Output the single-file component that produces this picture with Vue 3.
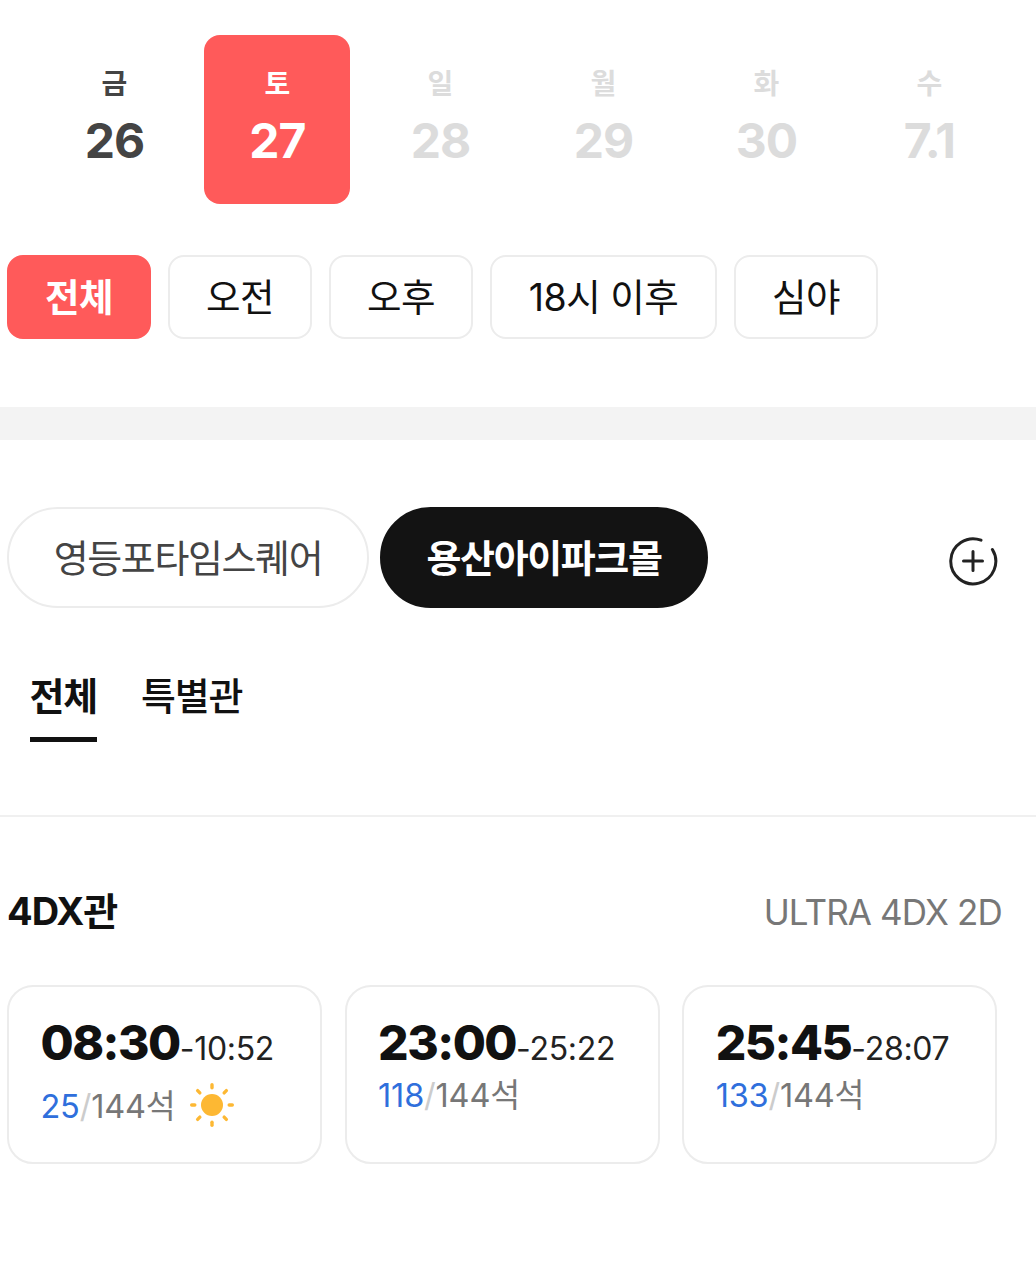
<script setup>
const dates = [
  { d: '금', n: '26', cls: 'normal' },
  { d: '토', n: '27', cls: 'active' },
  { d: '일', n: '28', cls: 'off' },
  { d: '월', n: '29', cls: 'off' },
  { d: '화', n: '30', cls: 'off' },
  { d: '수', n: '7.1', cls: 'off' }
]
const filters = ['전체', '오전', '오후', '18시 이후', '심야']
const shows = [
  { s: '08:30', e: '-10:52', left: '25', sun: true },
  { s: '23:00', e: '-25:22', left: '118' },
  { s: '25:45', e: '-28:07', left: '133' }
]
const rays = [0, 45, 90, 135, 180, 225, 270, 315]
</script>

<template>
  <div class="page">
    <div class="dates">
      <div v-for="x in dates" :key="x.n" class="date" :class="x.cls">
        <span class="day">{{ x.d }}</span>
        <span class="num">{{ x.n }}</span>
      </div>
    </div>
    <div class="filters">
      <button v-for="(f, i) in filters" :key="f" class="filter" :class="{ on: i === 0, wide: f.length > 3 }">{{ f }}</button>
    </div>
    <div class="band"></div>
    <div class="theaters">
      <button class="pill">영등포타임스퀘어</button>
      <button class="pill dark">용산아이파크몰</button>
      <svg class="plus" width="50" height="50" viewBox="0 0 50 50" fill="none" stroke="#222" stroke-width="3" stroke-linecap="round">
        <path d="M33 4.2A22.5 22.5 0 1 0 44.4 13.5" />
        <path d="M25 15.5v19M15.5 25h19" />
      </svg>
    </div>
    <div class="tabs">
      <div class="tab sel">전체</div>
      <div class="tab">특별관</div>
    </div>
    <div class="head">
      <span class="hall">4DX관</span>
      <span class="fmt">ULTRA 4DX 2D</span>
    </div>
    <div class="cards">
      <div v-for="c in shows" :key="c.s" class="card">
        <div class="time"><b>{{ c.s }}</b><span>{{ c.e }}</span></div>
        <div class="seats" :class="{ hasSun: c.sun }">
          <span class="left">{{ c.left }}</span><span class="slash">/</span><span class="total">144석</span>
          <svg v-if="c.sun" class="sun" width="46" height="46" viewBox="0 0 46 46">
            <circle cx="23" cy="23" r="11" fill="#fdb833" />
            <rect v-for="r in rays" :key="r" x="21.3" y="1" width="3.4" height="6.5" rx="1.7" fill="#fdb833" :transform="`rotate(${r} 23 23)`" />
          </svg>
        </div>
      </div>
    </div>
  </div>
</template>

<style>
html, body { margin: 0; background: #fff; }
</style>

<style scoped>
.page {
  width: 1036px;
  height: 1262px;
  overflow: hidden;
  background: #fff;
  font-family: Inter, "Noto Sans CJK KR", sans-serif;
  color: #111;
}
button { font-family: inherit; }
.dates {
  display: flex;
  gap: 17px;
  padding: 35px 0 0 41.4px;
}
.date {
  width: 146px;
  height: 169px;
  border-radius: 16px;
  box-sizing: border-box;
  padding-top: 31px;
  display: flex;
  flex-direction: column;
  align-items: center;
  color: #444;
}
.date.active { background: #ff5a5a; color: #fff; }
.date.off { color: #dcdcdc; }
.day { font-size: 28px; line-height: 36px; font-weight: 700; }
.num { font-size: 48px; line-height: 60px; font-weight: 700; letter-spacing: -1px; margin-top: 9px; }
.filters {
  display: flex;
  gap: 17px;
  padding: 51px 0 0 7px;
}
.filter {
  width: 144px;
  height: 84px;
  box-sizing: border-box;
  border: 2px solid #ececec;
  border-radius: 16px;
  background: #fff;
  color: #111;
  font-size: 37.5px;
  letter-spacing: -0.5px;
  padding: 0 0 6px;
}
.filter.wide { width: 227px; }
.filter.on { background: #ff5a5a; border-color: #ff5a5a; color: #fff; font-weight: 700; }
.band { height: 33px; background: #f3f3f3; margin-top: 68px; }
.theaters {
  display: flex;
  align-items: flex-start;
  padding: 67px 0 0 7px;
  position: relative;
}
.pill {
  height: 101px;
  width: 362px;
  box-sizing: border-box;
  border: 2px solid #ececec;
  border-radius: 51px;
  background: #fff;
  color: #444;
  font-size: 38px;
  letter-spacing: -1.4px;
  padding: 0 0 4px;
}
.pill.dark {
  width: 328px;
  margin-left: 11px;
  background: #131313;
  border-color: #131313;
  color: #fff;
  font-weight: 700;
}
.plus { margin: 29px 0 0 240px; flex: none; }
.tabs {
  display: flex;
  gap: 44px;
  padding: 60px 0 0 29.5px;
  height: 209px;
  box-sizing: border-box;
  border-bottom: 2px solid #f0f0f0;
}
.tab {
  height: 74px;
  box-sizing: border-box;
  font-size: 38px;
  line-height: 56px;
  letter-spacing: -1.2px;
  font-weight: 500;
  color: #111;
}
.tab.sel { font-weight: 700; border-bottom: 5px solid #111; }
.head {
  display: flex;
  justify-content: space-between;
  align-items: center;
  padding: 63px 34px 0 7px;
  height: 56px;
}
.hall { font-size: 38px; font-weight: 700; letter-spacing: -1px; }
.fmt { font-size: 35px; color: #777; letter-spacing: -0.85px; margin-top: 7px; }
.cards {
  display: flex;
  gap: 22.6px;
  padding: 49px 0 0 7px;
}
.card {
  width: 315px;
  height: 179px;
  box-sizing: border-box;
  border: 2px solid #ececec;
  border-radius: 26px;
  padding: 26px 0 0 31.5px;
}
.time { display: flex; align-items: baseline; line-height: 60px; white-space: nowrap; }
.time b { font-size: 48px; font-weight: 800; letter-spacing: -1.5px; }
.time span { font-size: 32px; letter-spacing: -0.3px; color: #222; }
.seats {
  display: flex;
  align-items: center;
  font-size: 32.5px;
  line-height: 44px;
  letter-spacing: -0.2px;
  margin-top: -5px;
}
.seats.hasSun { margin-top: 6px; }
.left { color: #2f6fdc; }
.slash { color: #ccc; }
.total { color: #777; }
.sun { margin: -4px 0 0 13px; flex: none; }
</style>
